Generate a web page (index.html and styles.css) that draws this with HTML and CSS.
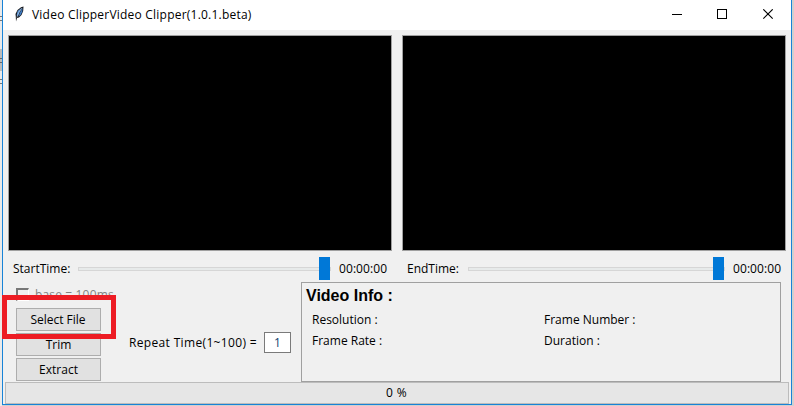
FILE: index.html
```
<!DOCTYPE html>
<html lang="en">
<head>
<meta charset="utf-8">
<title>Video Clipper</title>
<link rel="stylesheet" href="styles.css">
</head>
<body>
<div class="backdrop"><i class="mark m1"></i><i class="mark m2"></i><i class="mark m3"></i></div>
<main class="window">
  <header class="titlebar">
    <svg class="feather" width="12" height="17" viewBox="0 0 12 17">
      <path d="M2 15.5 1.8 11 1.5 8 3.5 4 7 1.2 9.5 .6 9.2 5 7.5 9 5 11.5 3 12z" fill="#17191d"/>
      <path d="M2.6 9.5 3.7 5 7.8 1.8 5.5 6 3.8 10z" fill="#5d96d8"/>
      <path d="M4.3 10.7 6 6.5 8.6 2 8.3 5.5 6.7 9z" fill="#3f7cc4"/>
      <path d="M2.8 11.5 5 6.5 8 2" fill="none" stroke="#b8d4ef" stroke-width=".6"/>
    </svg>
    <h1 class="title">Video ClipperVideo Clipper(1.0.1.beta)</h1>
    <svg class="controls" width="102" height="11" viewBox="0 0 102 11" fill="none" stroke="#000">
      <path d="M0 5.5h10M45.5.5h9v9h-9z" shape-rendering="crispEdges"/>
      <path d="M91.3.3l9.4 9.4M100.7.3l-9.4 9.4" stroke-width="1.1"/>
    </svg>
  </header>
  <section class="videos">
    <div class="screen"></div>
    <div class="screen"></div>
  </section>
  <section class="sliders">
    <div class="slider"><span class="slabel start">StartTime:</span><div class="track"><b class="thumb"></b></div><span class="time">00:00:00</span></div>
    <div class="slider"><span class="slabel end">EndTime:</span><div class="track"><b class="thumb"></b></div><span class="time">00:00:00</span></div>
  </section>
  <section class="lower">
    <div class="actions">
      <div class="check"><i class="box"></i><span class="base">base = 100ms</span></div>
      <button class="btn"><span class="t-select">Select File</span></button>
      <button class="btn"><span class="t-trim">Trim</span></button>
      <button class="btn"><span class="t-extract">Extract</span></button>
    </div>
    <div class="repeat"><span class="rlabel">Repeat Time(1~100) =</span><span class="entry">1</span></div>
    <div class="info">
      <h2 class="heading">Video Info :</h2>
      <div class="fields">
        <span class="f-res">Resolution :</span><span class="f-num">Frame Number :</span>
        <span class="f-rate">Frame Rate :</span><span class="f-dur">Duration :</span>
      </div>
    </div>
  </section>
  <footer class="progress"><span class="pct">0 %</span></footer>
  <div class="highlight"></div>
</main>
</body>
</html>
```
FILE: styles.css
```
* { box-sizing: border-box; }
body {
  margin: 0; width: 794px; height: 406px; overflow: hidden; position: relative;
  background: #d2d0ce; color: #000;
  font: 12px/16px "Open Sans", "Noto Sans", sans-serif;
  white-space: nowrap;
}
.backdrop { position: absolute; left: 0; top: 0; width: 2px; height: 406px; background: #eaeaea; }
.mark { position: absolute; left: 0; width: 2px; height: 5px; border: solid #777; border-width: 1px 0; }
.m1 { top: 16px; }
.m2 { top: 49px; height: 22px; border: 0; background: linear-gradient(#bbb 9px, #666 9px 10px, #bbb 10px 13px, #666 13px 14px, #bbb 14px); }
.m3 { top: 79px; }
.window {
  position: relative; margin-left: 2px; width: 790px; height: 405px;
  border: 1px solid #1883d7; border-top: 0; background: #f0f0f0;
  display: flex; flex-direction: column;
}
.titlebar { height: 30px; background: #fff; display: flex; align-items: center; padding: 0 17px 1px 11px; }
.feather { margin-right: 6px; margin-top: -1px; }
.title { margin: 0; font-size: 12px; font-weight: 400; letter-spacing: .22px; }
.controls { margin-left: auto; }
.videos { display: flex; gap: 10px; padding: 5px 0 0 5px; }
.screen { width: 384px; height: 216px; background: #000; border: 1px solid #a0a0a0; }
.sliders { display: flex; gap: 10px; padding-left: 5px; height: 31px; }
.slider { display: flex; align-items: center; width: 384px; height: 31px; padding: 4px 0 0 5px; }
.start { width: 65px; }
.end { width: 61px; }
.track { position: relative; flex: 1; height: 4px; margin-right: 8px; border: 1px solid #d6d6d6; background: #e7eaea; }
.thumb { position: absolute; right: 0; top: -11px; width: 11px; height: 23px; background: #0078d7; }
.time { width: 53px; letter-spacing: .08px; }
.lower { display: flex; height: 100px; }
.actions { width: 98px; padding: 4px 0 0 13px; display: flex; flex-direction: column; gap: 2px; }
.check { display: flex; align-items: center; height: 20px; padding-bottom: 3px; color: #838383; }
.box { flex: none; width: 13px; height: 13px; margin-right: 6px; border: 2px solid #777; border-right: 1px solid #fff; border-bottom: 1px solid #fff; }
.base { letter-spacing: .15px; }
.btn { width: 85px; height: 23px; padding: 0; border: 1px solid #adadad; background: #e1e1e1; color: #000; font: inherit; }
.t-select { margin-right: 1px; }
.repeat { width: 200px; display: flex; align-items: center; padding: 20px 0 0 28px; }
.rlabel { width: 135px; padding-top: 1px; letter-spacing: .34px; }
.entry { width: 27px; height: 21px; border: 1px solid #7a7a7a; background: #fff; text-align: center; line-height: 19px; color: #123f70; }
.info { width: 480px; height: 100px; border: 1px solid #a0a0a0; }
.heading { margin: 3px 0 0 4px; font: bold 16px/20px "Liberation Sans", Arial, sans-serif; }
.fields { display: grid; grid-template-columns: 232px 1fr; grid-auto-rows: 21px; line-height: 21px; padding: 3px 0 0 10px; }
.progress { width: 784px; height: 22px; margin-left: 2px; padding-right: 1px; border: 1px solid #bcbcbc; background: #e6e6e6; text-align: center; line-height: 20px; }
.pct { letter-spacing: .3px; }
.highlight { position: absolute; left: -1px; top: 295px; width: 114px; height: 44px; border: 5px solid #ed1c24; }
```
